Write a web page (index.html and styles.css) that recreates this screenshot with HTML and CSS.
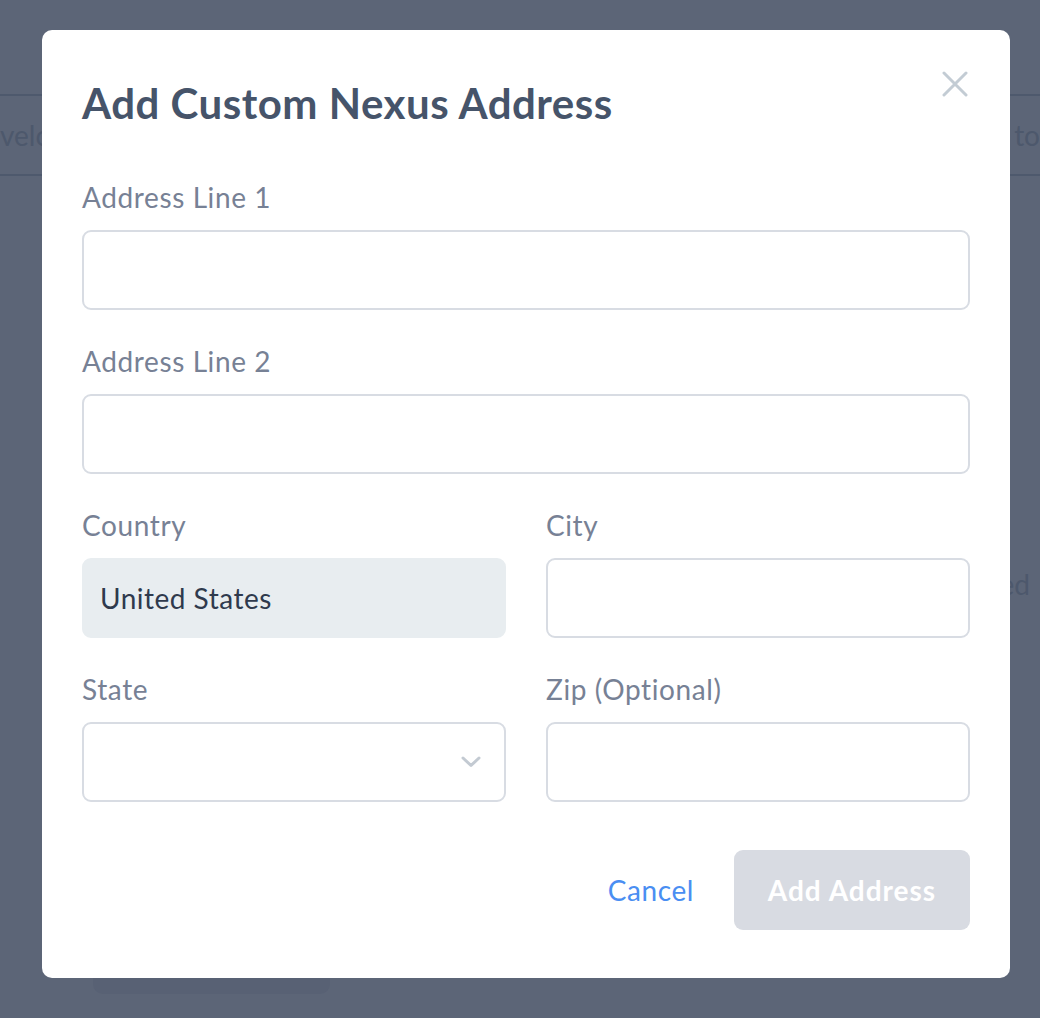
FILE: index.html
```html
<!DOCTYPE html>
<html>
<head>
<meta charset="utf-8">
<link rel="stylesheet" href="styles.css">
</head>
<body>
<div class="page">
  <div class="tabs">
    <span class="tab-text">velo</span>
    <span class="tab-text">to</span>
  </div>
  <div class="page-body">
    <span class="side-text">ed</span>
  </div>
  <div class="page-btn"></div>
</div>
<div class="overlay">
  <div class="modal">
    <button class="close" aria-label="Close">
      <svg width="26" height="26" viewBox="0 0 26 26"><path d="M2 2 L24 24 M24 2 L2 24" stroke="#c3ccd4" stroke-width="3" stroke-linecap="round" fill="none"/></svg>
    </button>
    <h1 class="title">Add Custom Nexus Address</h1>
    <div class="field">
      <label class="label">Address Line 1</label>
      <div class="input"></div>
    </div>
    <div class="field">
      <label class="label">Address Line 2</label>
      <div class="input"></div>
    </div>
    <div class="row">
      <div class="field">
        <label class="label">Country</label>
        <div class="input disabled">United States</div>
      </div>
      <div class="field">
        <label class="label">City</label>
        <div class="input"></div>
      </div>
    </div>
    <div class="row">
      <div class="field">
        <label class="label">State</label>
        <div class="input select">
          <svg class="chev" width="20" height="12" viewBox="0 0 20 12"><path d="M2 2 L10 9.5 L18 2" stroke="#c3cad2" stroke-width="3" stroke-linecap="round" stroke-linejoin="round" fill="none"/></svg>
        </div>
      </div>
      <div class="field">
        <label class="label">Zip (Optional)</label>
        <div class="input"></div>
      </div>
    </div>
    <div class="actions">
      <button class="cancel">Cancel</button>
      <button class="submit">Add Address</button>
    </div>
  </div>
</div>
</body>
</html>
```
FILE: styles.css
```css
* { box-sizing: border-box; }
html, body { margin: 0; padding: 0; }
body {
  width: 1040px;
  height: 1018px;
  overflow: hidden;
  background: #5c6577;
  font-family: "Lato", "Open Sans", sans-serif;
  position: relative;
}
.page {
  height: 1018px;
  overflow: hidden;
}
.tabs {
  margin-top: 94px;
  height: 82px;
  border-top: 2px solid #4e596d;
  border-bottom: 2px solid #4e596d;
  display: flex;
  justify-content: space-between;
  align-items: center;
  font-size: 28px;
  color: #4d586c;
}
.page-body {
  height: 420px;
  display: flex;
  justify-content: flex-end;
  align-items: flex-end;
  padding-right: 10px;
  font-size: 28px;
  color: #4d586c;
}
.side-text { margin-bottom: -5px; }
.page-btn {
  margin: 382px 0 0 93px;
  width: 237px;
  height: 16px;
  background: #586174;
  border-radius: 0 0 10px 10px;
}
.overlay {
  position: absolute;
  inset: 0;
  padding: 30px 30px 40px 42px;
}
.modal {
  position: relative;
  width: 968px;
  height: 948px;
  background: #fff;
  border-radius: 10px;
  padding: 52px 40px 48px 40px;
  display: flex;
  flex-direction: column;
}
.close {
  position: absolute;
  top: 41px;
  right: 42px;
  width: 26px;
  height: 26px;
  padding: 0;
  border: 0;
  background: transparent;
  display: flex;
}
.title {
  margin: 0 0 56px 0;
  font-size: 42px;
  line-height: 1;
  font-weight: 700;
  letter-spacing: 0.5px;
  color: #46546a;
}
.field {
  display: flex;
  flex-direction: column;
  margin-bottom: 34px;
  flex: 1;
}
.label {
  font-size: 28px;
  line-height: 34px;
  height: 34px;
  letter-spacing: 0.6px;
  color: #778195;
  margin-bottom: 16px;
}
.input {
  height: 80px;
  border: 2px solid #d8dce3;
  border-radius: 9px;
  display: flex;
  align-items: center;
  padding: 0 16px;
  font-size: 28px;
  letter-spacing: 0.5px;
  color: #2f3a4d;
}
.disabled {
  background: #e8edf0;
  border-color: #e8edf0;
}
.select { justify-content: flex-end; padding-right: 23px; }
.row {
  display: flex;
  gap: 40px;
}
.actions {
  margin-top: 14px;
  display: flex;
  justify-content: flex-end;
  align-items: center;
  gap: 40px;
}
.cancel {
  border: 0;
  background: transparent;
  font-family: inherit;
  font-size: 28px;
  letter-spacing: 0.6px;
  color: #4a8ef2;
  padding: 0;
}
.submit {
  width: 236px;
  height: 80px;
  border: 0;
  border-radius: 9px;
  background: #d8dbe2;
  color: #fff;
  font-family: inherit;
  font-weight: 700;
  font-size: 28px;
  letter-spacing: 1px;
}
```
